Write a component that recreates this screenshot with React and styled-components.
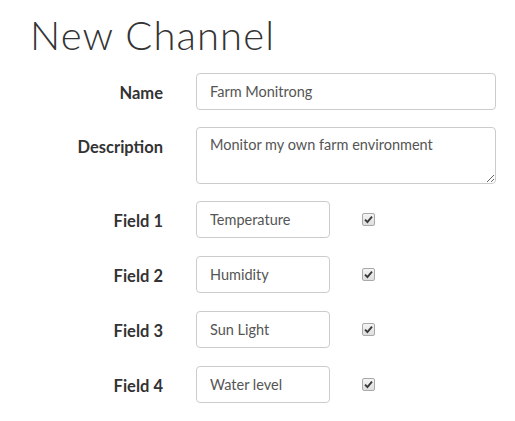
import React from "react";
import styled, { createGlobalStyle } from "styled-components";

const Global = createGlobalStyle`
  html, body { margin: 0; padding: 0; background: #fff; }
  body { font-family: "Lato", "Open Sans", sans-serif; color: #333; }
`;

const Page = styled.div`
  padding: 13px 0 0 30px;
  width: 466px;
`;

const Title = styled.h1`
  margin: 0 0 15px 0;
  font-family: "Lato", sans-serif;
  font-weight: 300;
  font-size: 40px;
  line-height: 45px;
  letter-spacing: 1.1px;
  color: #333;
`;

const Form = styled.div`
  display: flex;
  flex-direction: column;
`;

const Row = styled.div`
  display: grid;
  grid-template-columns: 133px 134px 1fr;
  column-gap: 33px;
  align-items: ${(p) => (p.$top ? "start" : "center")};
  margin-top: ${(p) => p.$mt || 0}px;
`;

const Label = styled.label`
  text-align: right;
  font-family: "Lato", sans-serif;
  font-weight: 700;
  font-size: 16.5px;
  color: #333;
  padding-top: ${(p) => (p.$top ? "10px" : "0")};
  transform: translateY(${(p) => (p.$top ? "0" : "1px")});
`;

const Input = styled.input`
  box-sizing: border-box;
  height: 37px;
  width: 100%;
  grid-column: ${(p) => (p.$wide ? "2 / 4" : "auto")};
  border: 1px solid #ccc;
  border-radius: 4px;
  padding: 0 13px;
  font-family: "Lato", sans-serif;
  font-size: 14.5px;
  color: #555;
  background: #fff;
  outline: none;
`;

const TextArea = styled.textarea`
  box-sizing: border-box;
  grid-column: 2 / 4;
  height: 57px;
  width: 100%;
  border: 1px solid #ccc;
  border-radius: 4px;
  padding: 8px 13px;
  font-family: "Lato", sans-serif;
  font-size: 14.5px;
  line-height: 18px;
  color: #555;
  resize: vertical;
  outline: none;
  display: block;
`;

const CheckCell = styled.div`
  display: flex;
  align-items: center;
  margin-left: -1px;
`;

const CheckBox = styled.span`
  box-sizing: border-box;
  width: 13px;
  height: 13px;
  border: 1px solid #a9a9a9;
  border-radius: 2px;
  background: linear-gradient(#f4f4f4, #dedede);
  display: flex;
  align-items: center;
  justify-content: center;
`;

const Check = () => (
  <CheckBox>
    <svg width="9" height="9" viewBox="0 0 9 9">
      <path d="M1 4.6 L3.4 7 L8 1.6" fill="none" stroke="#3a3a3a" strokeWidth="1.9" />
    </svg>
  </CheckBox>
);

const fields = ["Temperature", "Humidity", "Sun Light", "Water level"];

export default function App() {
  return (
    <>
      <Global />
      <Page>
        <Title>New Channel</Title>
        <Form>
          <Row>
            <Label>Name</Label>
            <Input $wide defaultValue="Farm Monitrong" />
          </Row>
          <Row $top $mt={17}>
            <Label $top>Description</Label>
            <TextArea defaultValue="Monitor my own farm environment" />
          </Row>
          {fields.map((f, i) => (
            <Row key={f} $mt={i === 0 ? 17 : 18}>
              <Label>Field {i + 1}</Label>
              <Input defaultValue={f} />
              <CheckCell>
                <Check />
              </CheckCell>
            </Row>
          ))}
        </Form>
      </Page>
    </>
  );
}
